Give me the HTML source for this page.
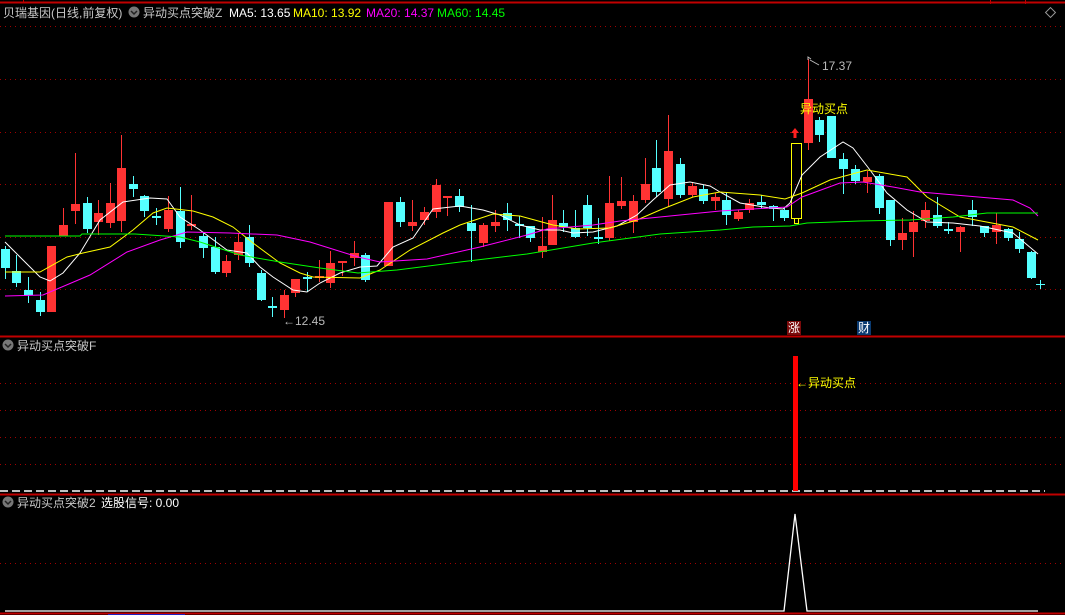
<!DOCTYPE html>
<html><head><meta charset="utf-8"><style>
html,body{margin:0;padding:0;background:#000;width:1065px;height:615px;overflow:hidden}
svg{display:block}
text{font-family:"Liberation Sans","Noto Sans CJK SC",sans-serif;font-size:12px}
</style></head><body>
<svg id="s" width="1065" height="615" xmlns="http://www.w3.org/2000/svg">
<rect width="1065" height="615" fill="#000"/>
<g stroke="#c00000" stroke-width="1">
<line x1="0" y1="2.5" x2="1065" y2="2.5" stroke-width="2"/>
<line x1="0" y1="336.5" x2="1065" y2="336.5" stroke-width="2"/>
<line x1="0" y1="494.5" x2="1065" y2="494.5" stroke-width="2"/>
<line x1="0" y1="613.5" x2="1065" y2="613.5" stroke-width="2"/>
<line x1="23.5" y1="0" x2="23.5" y2="3"/><line x1="990.5" y1="0" x2="990.5" y2="4"/><line x1="1025.5" y1="0" x2="1025.5" y2="4"/>
</g>
<line x1="108" y1="614.5" x2="185" y2="614.5" stroke="#2020c0" stroke-width="1"/>
<g stroke="#a00000" stroke-width="1" stroke-dasharray="1,4">
<line x1="0" y1="26.5" x2="1065" y2="26.5"/><line x1="0" y1="79.5" x2="1065" y2="79.5"/>
<line x1="0" y1="132.5" x2="1065" y2="132.5"/><line x1="0" y1="184.5" x2="1065" y2="184.5"/>
<line x1="0" y1="237.5" x2="1065" y2="237.5"/><line x1="0" y1="289.5" x2="1065" y2="289.5"/>
<line x1="0" y1="383.5" x2="1065" y2="383.5"/><line x1="0" y1="410.5" x2="1065" y2="410.5"/>
<line x1="0" y1="437.5" x2="1065" y2="437.5"/><line x1="0" y1="464.5" x2="1065" y2="464.5"/>
<line x1="0" y1="563.5" x2="1065" y2="563.5"/>
</g>
<line x1="0" y1="491" x2="1045" y2="491" stroke="#fff" stroke-width="1.5" stroke-dasharray="8,4"/>
<g id="c"></g>
<g fill="none" stroke-width="1">
<polyline id="mw" stroke="#fff"/>
<polyline id="my" stroke="#ffff00"/>
<polyline id="mm" stroke="#ff00ff"/>
<polyline id="mg" stroke="#00ff00"/>
</g>
<!-- header -->
<text x="3" y="17" fill="#c8c8c8">贝瑞基因(日线,前复权)</text>
<circle cx="134" cy="12" r="5.5" fill="#777"/><path d="M131 11l3 3 3-3" stroke="#222" stroke-width="1.5" fill="none"/>
<text x="143" y="17" fill="#c8c8c8">异动买点突破Z</text>
<text x="229" y="17" fill="#fff">MA5: 13.65</text>
<text x="293" y="17" fill="#ffff00">MA10: 13.92</text>
<text x="366" y="17" fill="#ff00ff">MA20: 14.37</text>
<text x="437" y="17" fill="#00ff00">MA60: 14.45</text>
<rect x="1047" y="9" width="7" height="7" transform="rotate(45 1050.5 12.5)" fill="none" stroke="#999"/>
<!-- annotations -->
<path d="M808 60v-3l3 2 M810 60l9 5" stroke="#bbb" fill="none"/>
<text x="822" y="70" fill="#bbb">17.37</text>
<text x="800" y="113" fill="#ffff00">异动买点</text>
<path d="M795 128l-4 5h2.5v5h3v-5h2.5z" fill="#ff2020"/>
<text x="283" y="325" fill="#bbb">←12.45</text>
<rect x="787" y="321" width="14" height="14" fill="#7a0a0a"/><text x="788" y="332" fill="#fff">涨</text>
<rect x="857" y="321" width="14" height="14" fill="#0a3a70"/><text x="858" y="332" fill="#fff">财</text>
<!-- panel2 -->
<circle cx="8" cy="345" r="5.5" fill="#777"/><path d="M5 344l3 3 3-3" stroke="#222" stroke-width="1.5" fill="none"/>
<text x="17" y="350" fill="#c8c8c8">异动买点突破F</text>
<rect x="793" y="356" width="5" height="135" fill="#ff0000"/>
<text x="796" y="387" fill="#ffff00">←异动买点</text>
<!-- panel3 -->
<circle cx="8" cy="502" r="5.5" fill="#777"/><path d="M5 501l3 3 3-3" stroke="#222" stroke-width="1.5" fill="none"/>
<text x="17" y="507" fill="#c8c8c8">异动买点突破2</text>
<text x="101" y="507" fill="#fff">选股信号: 0.00</text>
<polyline points="5,611 784,611 795,514 807,611 1038,611" fill="none" stroke="#fff" stroke-width="1.3"/>
</svg>
<script>
var C=[[5,'c',249,268,246,279],[16,'c',271,283,255,287],[28,'c',290,295,277,303],[40,'c',300,312,292,316],[51,'r',246,312,246,312],[63,'r',225,236,208,236],[75,'r',204,211,153,224],[87,'c',203,229,197,233],[98,'r',213,222,200,235],[110,'r',203,223,183,228],[121,'r',168,221,135,232],[133,'c',184,189,176,197],[144,'c',196,211,195,217],[156,'c',216,218,208,225],[168,'r',210,229,196,232],[180,'c',211,242,187,248],[191,'r',224,226,195,230],[203,'c',236,248,233,258],[215,'c',247,272,237,274],[226,'r',261,273,255,277],[238,'r',242,255,233,260],[249,'c',237,263,225,267],[261,'c',273,300,270,301],[272,'c',306,308,297,317],[284,'r',295,310,290,318],[295,'r',279,293,279,297],[307,'c',277,279,272,292],[319,'r',276,278,260,282],[330,'r',263,283,251,288],[342,'r',261,263,261,276],[354,'r',253,258,241,266],
[365,'c',255,280,253,282],[388,'r',202,266,202,266],[400,'c',202,222,197,227],[412,'r',222,226,200,231],[424,'r',212,220,207,225],[436,'r',185,212,179,218],[447,'r',196,198,196,216],[459,'c',196,207,189,212],[471,'c',223,231,205,262],[483,'r',225,243,223,247],[495,'r',222,226,210,232],[507,'c',213,220,203,231],[519,'c',224,226,216,238],[530,'c',226,238,226,242],[542,'r',246,252,217,258],[552,'r',220,245,195,245],[563,'c',223,227,210,232],[575,'c',228,237,210,238],[587,'c',205,228,195,236],[598,'c',237,239,218,244],[609,'r',203,238,176,241],[621,'r',201,206,177,209],[633,'r',201,222,195,233],[645,'r',184,200,158,203],[656,'c',168,192,140,197],[668,'r',151,199,115,207],[680,'c',164,195,158,198],[692,'r',186,195,183,197],[703,'c',189,201,185,204],[715,'r',197,201,193,210],
[726,'c',200,215,192,225],[738,'r',212,219,210,221],[749,'r',203,210,199,213],[761,'c',202,205,195,209],[773,'c',206,209,205,221],[784,'c',210,218,207,221],[808,'r',99,143,59,150],[819,'c',120,135,117,142],[831,'c',116,158,116,158],[843,'c',159,169,153,194],[855,'c',169,181,165,184],[867,'r',177,182,171,193],[879,'c',176,208,174,214],[890,'c',200,240,200,246],[902,'r',233,240,218,250],[913,'r',222,232,211,257],[925,'r',210,221,202,228],[937,'c',215,226,197,228],[948,'c',229,231,222,234],[960,'r',227,232,226,252],[972,'c',210,217,200,226],[984,'c',226,233,226,237],[996,'r',225,232,213,244],[1008,'c',229,238,228,241],[1019,'c',239,249,232,253],[1031,'c',252,278,251,279],[1040,'c',284,285,280,289]];
var h='';C.forEach(function(k){var x=k[0],col=k[1]=='r'?'#ff3333':'#55ffff';
h+='<line x1="'+(x+.5)+'" y1="'+k[4]+'" x2="'+(x+.5)+'" y2="'+k[5]+'" stroke="'+col+'"/>';
var hh=k[3]-k[2];if(hh<2){h+='<line x1="'+(x-4)+'" y1="'+(k[2]+.5)+'" x2="'+(x+5)+'" y2="'+(k[2]+.5)+'" stroke="'+col+'"/>';}
else h+='<rect x="'+(x-4)+'" y="'+k[2]+'" width="9" height="'+hh+'" fill="'+col+'"/>';});
h+='<rect x="791.5" y="143.5" width="10" height="75" fill="none" stroke="#ffff00"/><rect x="794.5" y="218.5" width="4" height="5" fill="none" stroke="#ffff00"/>';
document.getElementById('c').innerHTML=h;
function P(id,a){document.getElementById(id).setAttribute('points',a.map(function(p){return p.join(',')}).join(' '));}
P('mw',[[5,242],[20,257],[40,277],[50,281],[63,273],[80,253],[100,220],[123,202],[150,198],[167,199],[180,217],[200,230],[227,250],[247,253],[260,267],[273,277],[293,290],[307,292],[320,283],[340,273],[360,267],[377,266],[393,247],[413,238],[433,209],[460,206],[483,210],[500,215],[520,225],[540,230],[560,230],[573,233],[593,232],[617,226],[637,215],[653,200],[670,185],[690,182],[710,186],[720,192],[740,203],[770,208],[783,209],[790,203],[802,175],[820,157],[843,142],[853,148],[870,170],[887,193],[907,210],[927,222],[953,223],[980,226],[1013,233],[1038,254]]);
P('my',[[5,272],[40,272],[67,257],[83,253],[110,247],[133,230],[153,213],[167,208],[193,211],[213,217],[233,227],[253,243],[280,263],[300,273],[313,277],[360,278],[380,270],[410,250],[443,233],[460,225],[493,214],[520,216],[553,225],[577,229],[610,228],[637,220],[660,210],[693,197],[720,192],[760,195],[785,199],[802,193],[830,180],[867,170],[907,177],[927,197],[960,217],[1013,227],[1038,240]]);
P('mm',[[5,296],[43,295],[90,275],[127,252],[160,240],[187,232],[230,233],[277,235],[310,242],[358,257],[380,262],[427,259],[480,247],[527,235],[547,229],[593,225],[620,221],[660,217],[720,211],[787,207],[802,197],[840,183],[863,182],[893,187],[920,192],[1013,200],[1030,208],[1038,216]]);
P('mg',[[5,236],[80,236],[82,234],[135,234],[180,237],[200,242],[240,255],[280,262],[320,268],[358,273],[397,270],[460,262],[527,254],[593,243],[660,234],[720,230],[753,227],[790,226],[807,223],[860,221],[910,220],[953,217],[987,213],[1038,213]]);
</script>
</body></html>
